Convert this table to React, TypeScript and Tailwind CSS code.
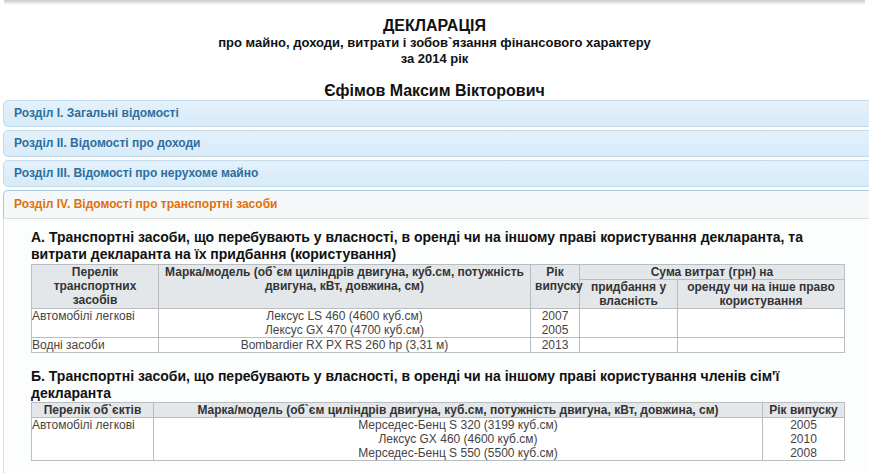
import React from "react";

const sections = [
  "Розділ I. Загальні відомості",
  "Розділ II. Відомості про доходи",
  "Розділ III. Відомості про нерухоме майно",
];

const th = "border border-[#b9bdc1] bg-[#e4e7ea] px-1 font-bold text-[#333] leading-[14px] text-center align-top";
const td = "border border-[#b9bdc1] px-0 text-[#444] leading-[14px] align-top";

export default function App() {
  return (
    <div className="relative w-[869px] h-[473px] overflow-hidden bg-white text-[12px]" style={{ fontFamily: '"Liberation Sans", Arial, sans-serif' }}>
      <div className="mx-[4px] h-[5px] bg-gradient-to-b from-[#c9c9c9] to-white" />

      <div className="pt-[11px] text-center text-[#111] font-bold">
        <div className="text-[16px] leading-[19px]">ДЕКЛАРАЦІЯ</div>
        <div className="text-[13px] leading-[16px]">про майно, доходи, витрати і зобов`язання фінансового характеру</div>
        <div className="text-[13px] leading-[16px]">за 2014 рік</div>
        <div className="mt-[14px] text-[16px] leading-[19px]">Єфімов Максим Вікторович</div>
      </div>

      <div className="ml-[3px] w-[900px]">
        {sections.map((s) => (
          <div
            key={s}
            className="mb-[3px] h-[27px] rounded-l-[5px] border border-[#c5dbec] bg-gradient-to-b from-[#e4f1fb] to-[#d7ebf9] pl-[10px] text-[12px] font-bold leading-[25px] text-[#2e6e9e]"
          >
            {s}
          </div>
        ))}
        <div className="h-[28px] rounded-tl-[5px] border border-b-0 border-[#a6c9e2] bg-[#f5f8f9] pl-[10px] text-[12px] font-bold leading-[27px] text-[#e17009]">
          Розділ IV. Відомості про транспортні засоби
        </div>
        <div className="border-l border-t border-[#dddddd] bg-[#fcfdfd] pl-[27px] pt-[10px] pb-[20px]">
          <div className="w-[814px]">
            <div className="text-[14px] font-bold leading-[17px] text-[#111]">
              А. Транспортні засоби, що перебувають у власності, в оренді чи на іншому праві користування декларанта, та витрати декларанта на їх придбання (користування)
            </div>
            <table className="mt-[1px] w-[814px] table-fixed border-collapse bg-white">
              <colgroup>
                <col className="w-[127px]" />
                <col className="w-[372px]" />
                <col className="w-[49px]" />
                <col className="w-[98px]" />
                <col />
              </colgroup>
              <thead>
                <tr>
                  <th rowSpan={2} className={th}>Перелік транспортних засобів</th>
                  <th rowSpan={2} className={th}>Марка/модель (об`єм циліндрів двигуна, куб.см, потужність двигуна, кВт, довжина, см)</th>
                  <th rowSpan={2} className={th + " px-0"}>Рік випуску</th>
                  <th colSpan={2} className={th}>Сума витрат (грн) на</th>
                </tr>
                <tr>
                  <th className={th}>придбання у власність</th>
                  <th className={th}>оренду чи на інше право користування</th>
                </tr>
              </thead>
              <tbody>
                <tr>
                  <td className={td}>Автомобілі легкові</td>
                  <td className={td + " text-center"}>Лексус LS 460 (4600 куб.см)<br />Лексус GX 470 (4700 куб.см)</td>
                  <td className={td + " text-center"}>2007<br />2005</td>
                  <td className={td} />
                  <td className={td} />
                </tr>
                <tr>
                  <td className={td}>Водні засоби</td>
                  <td className={td + " text-center"}>Bombardier RX PX RS 260 hp (3,31 м)</td>
                  <td className={td + " text-center"}>2013</td>
                  <td className={td} />
                  <td className={td} />
                </tr>
              </tbody>
            </table>

            <div className="mt-[15px] text-[14px] font-bold leading-[17px] text-[#111]">
              Б. Транспортні засоби, що перебувають у власності, в оренді чи на іншому праві користування членів сім'ї декларанта
            </div>
            <table className="w-[814px] table-fixed border-collapse bg-white">
              <colgroup>
                <col className="w-[122px]" />
                <col className="w-[609px]" />
                <col />
              </colgroup>
              <thead>
                <tr>
                  <th className={th}>Перелік об`єктів</th>
                  <th className={th}>Марка/модель (об`єм циліндрів двигуна, куб.см, потужність двигуна, кВт, довжина, см)</th>
                  <th className={th}>Рік випуску</th>
                </tr>
              </thead>
              <tbody>
                <tr>
                  <td className={td}>Автомобілі легкові</td>
                  <td className={td + " text-center"}>
                    Мерседес-Бенц S 320 (3199 куб.см)<br />Лексус GX 460 (4600 куб.см)<br />Мерседес-Бенц S 550 (5500 куб.см)
                  </td>
                  <td className={td + " text-center"}>2005<br />2010<br />2008</td>
                </tr>
              </tbody>
            </table>
          </div>
        </div>
      </div>
    </div>
  );
}
